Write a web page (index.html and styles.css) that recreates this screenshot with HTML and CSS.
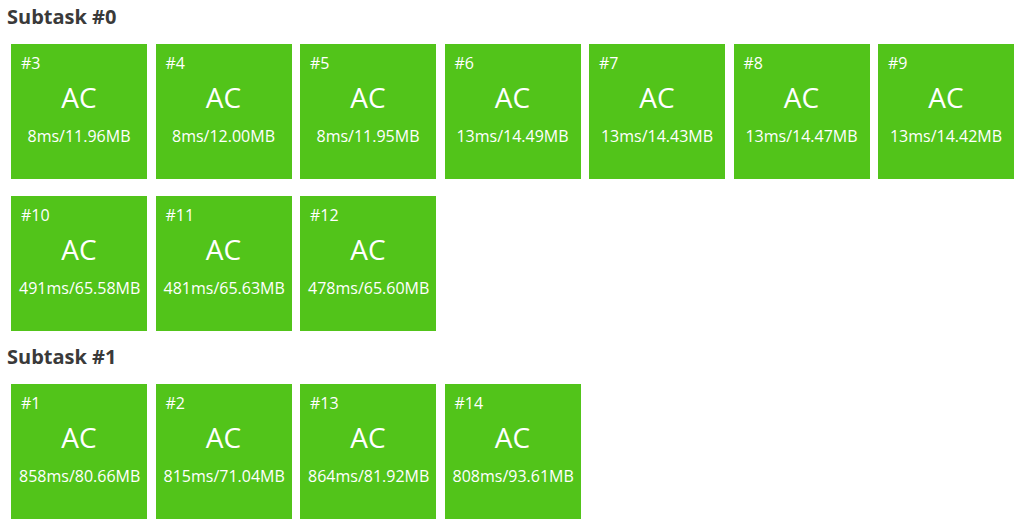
FILE: index.html
```html
<!DOCTYPE html>
<html>
<head>
<meta charset="utf-8">
<link rel="stylesheet" href="styles.css">
</head>
<body>
<div class="page">
  <section class="subtask">
    <h3 class="subtask-title">Subtask #0</h3>
    <div class="grid">
      <div class="tile"><div class="tid">#3</div><div class="status">AC</div><div class="stats">8ms/11.96MB</div></div>
      <div class="tile"><div class="tid">#4</div><div class="status">AC</div><div class="stats">8ms/12.00MB</div></div>
      <div class="tile"><div class="tid">#5</div><div class="status">AC</div><div class="stats">8ms/11.95MB</div></div>
      <div class="tile"><div class="tid">#6</div><div class="status">AC</div><div class="stats">13ms/14.49MB</div></div>
      <div class="tile"><div class="tid">#7</div><div class="status">AC</div><div class="stats">13ms/14.43MB</div></div>
      <div class="tile"><div class="tid">#8</div><div class="status">AC</div><div class="stats">13ms/14.47MB</div></div>
      <div class="tile"><div class="tid">#9</div><div class="status">AC</div><div class="stats">13ms/14.42MB</div></div>
      <div class="tile"><div class="tid">#10</div><div class="status">AC</div><div class="stats">491ms/65.58MB</div></div>
      <div class="tile"><div class="tid">#11</div><div class="status">AC</div><div class="stats">481ms/65.63MB</div></div>
      <div class="tile"><div class="tid">#12</div><div class="status">AC</div><div class="stats">478ms/65.60MB</div></div>
    </div>
  </section>
  <section class="subtask">
    <h3 class="subtask-title">Subtask #1</h3>
    <div class="grid">
      <div class="tile"><div class="tid">#1</div><div class="status">AC</div><div class="stats">858ms/80.66MB</div></div>
      <div class="tile"><div class="tid">#2</div><div class="status">AC</div><div class="stats">815ms/71.04MB</div></div>
      <div class="tile"><div class="tid">#13</div><div class="status">AC</div><div class="stats">864ms/81.92MB</div></div>
      <div class="tile"><div class="tid">#14</div><div class="status">AC</div><div class="stats">808ms/93.61MB</div></div>
    </div>
  </section>
</div>
</body>
</html>
```

FILE: styles.css
```css
html, body {
  margin: 0;
  padding: 0;
  background: #ffffff;
}
body {
  font-family: "Open Sans", "Noto Sans", "Liberation Sans", sans-serif;
  color: #333333;
}
.page {
  padding: 3px 10px 0 7px;
}
.subtask-title {
  margin: 0;
  font-size: 20px;
  font-weight: 700;
  line-height: 28px;
  color: #3a3a3a;
}
.grid {
  display: grid;
  grid-template-columns: repeat(7, 136px);
  column-gap: 8.5px;
  row-gap: 17px;
  margin: 13px 0 11.5px 4px;
}
.tile {
  background: #52c41a;
  color: #ffffff;
  height: 135px;
  display: flex;
  flex-direction: column;
  padding: 8px 8px 0 10px;
  box-sizing: border-box;
}
.tid {
  font-size: 16px;
  line-height: 22px;
}
.status {
  text-align: center;
  font-size: 28px;
  line-height: 36px;
  margin-top: 5px;
  margin-left: -2px;
}
.stats {
  text-align: center;
  font-size: 16px;
  line-height: 22px;
  margin-top: 10px;
  margin-left: -2px;
  white-space: nowrap;
}
```
